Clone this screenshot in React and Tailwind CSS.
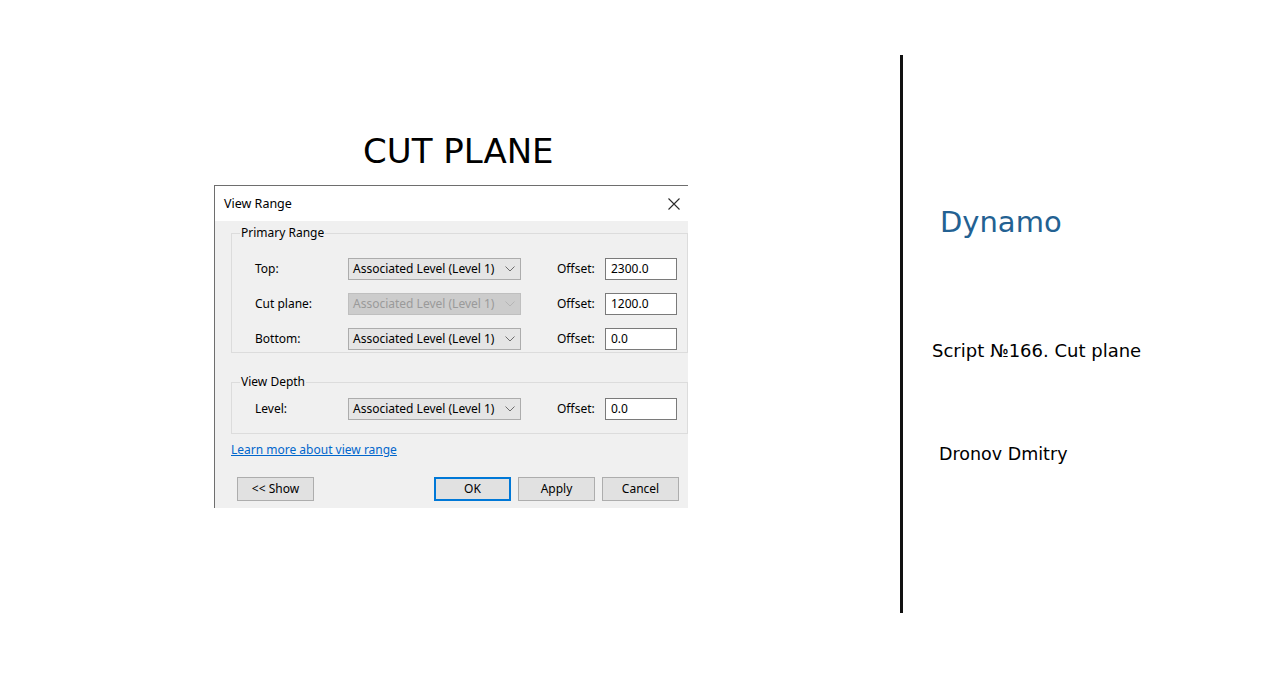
import React from "react";

const Chevron = ({ color = "#6d6d6d" }) => (
  <svg width="10" height="6" viewBox="0 0 10 6" className="shrink-0">
    <polyline points="0.5,0.5 5,5 9.5,0.5" fill="none" stroke={color} strokeWidth="1" />
  </svg>
);

const Select = ({ disabled }) => (
  <div
    className={
      "w-[173px] h-[22px] flex items-center justify-between pl-[4px] pr-[5px] border " +
      (disabled
        ? "bg-[#cccccc] border-[#bfbfbf] text-[#9a9a9a]"
        : "bg-[#e5e5e5] border-[#acacac] text-black")
    }
  >
    <span className="whitespace-nowrap">Associated Level (Level 1)</span>
    <Chevron color={disabled ? "#b5b5b5" : "#6d6d6d"} />
  </div>
);

const Row = ({ label, value, disabled }) => (
  <div className="flex items-center">
    <div className="w-[93px]">{label}</div>
    <Select disabled={disabled} />
    <div className="ml-[36px] w-[48px]">Offset:</div>
    <div className="w-[72px] h-[22px] bg-white border border-[#7a7a7a] flex items-center pl-[5px]">
      {value}
    </div>
  </div>
);

const Group = ({ title, children, className = "" }) => (
  <div className={"relative ml-[16px] border border-[#dcdcdc] " + className}>
    <span className="absolute -top-[10px] left-[8px] bg-[#f0f0f0] px-[1px] leading-[18px]">
      {title}
    </span>
    {children}
  </div>
);

const Button = ({ children, primary }) => (
  <div
    className={
      "w-[77px] h-[24px] flex items-center justify-center bg-[#e1e1e1] " +
      (primary ? "border-2 border-[#0078d7]" : "border border-[#adadad]")
    }
  >
    {children}
  </div>
);

export default function App() {
  return (
    <div className="w-[1275px] h-[675px] bg-white flex overflow-hidden">
      <div className="w-[900px] shrink-0 flex flex-col pt-[131px]">
        <div
          className="ml-[363px] h-[40px] leading-[40px] text-[34px] text-black whitespace-nowrap"
          style={{ fontFamily: '"DejaVu Sans", sans-serif' }}
        >
          CUT PLANE
        </div>
        <div
          className="mt-[14px] ml-[214px] w-[474px] h-[323px] border-l border-t border-[#6e6e6e] bg-[#f0f0f0] flex flex-col text-[12px] leading-[16px] text-black"
          style={{ fontFamily: '"Noto Sans", sans-serif' }}
        >
          <div className="h-[35px] bg-white flex items-center justify-between pl-[9px] pr-[8px]">
            <span className="text-[12.5px]">View Range</span>
            <svg width="12" height="12" viewBox="0 0 12 12">
              <path d="M0.5 0.5 L11.5 11.5 M11.5 0.5 L0.5 11.5" stroke="#2b2b2b" strokeWidth="1.1" fill="none" />
            </svg>
          </div>
          <Group title="Primary Range" className="mt-[12px] pt-[24px] pb-[2px] pl-[23px]">
            <div className="flex flex-col gap-[13px]">
              <Row label="Top:" value="2300.0" />
              <Row label="Cut plane:" value="1200.0" disabled />
              <Row label="Bottom:" value="0.0" />
            </div>
          </Group>
          <Group title="View Depth" className="mt-[29px] pt-[15px] pb-[13px] pl-[23px]">
            <Row label="Level:" value="0.0" />
          </Group>
          <div className="ml-[16px] mt-[8px] text-[#0066cc] underline">Learn more about view range</div>
          <div className="mt-[19px] flex items-center pl-[22px] pr-[9px]">
            <Button>&lt;&lt; Show</Button>
            <div className="ml-auto flex gap-[7px]">
              <Button primary>OK</Button>
              <Button>Apply</Button>
              <Button>Cancel</Button>
            </div>
          </div>
        </div>
      </div>
      <div className="self-start mt-[55px] h-[558px] w-[3px] bg-[#111111] shrink-0" />
      <div
        className="flex flex-col pt-[205px] text-black"
        style={{ fontFamily: '"DejaVu Sans", sans-serif' }}
      >
        <div className="ml-[37px] h-[34px] leading-[34px] text-[29px] text-[#236192]">Dynamo</div>
        <div className="ml-[29px] mt-[101px] h-[22px] leading-[22px] text-[18px] whitespace-nowrap">
          Script №166. Cut plane
        </div>
        <div className="ml-[36px] mt-[81px] h-[22px] leading-[22px] text-[17.5px]">Dronov Dmitry</div>
      </div>
    </div>
  );
}
